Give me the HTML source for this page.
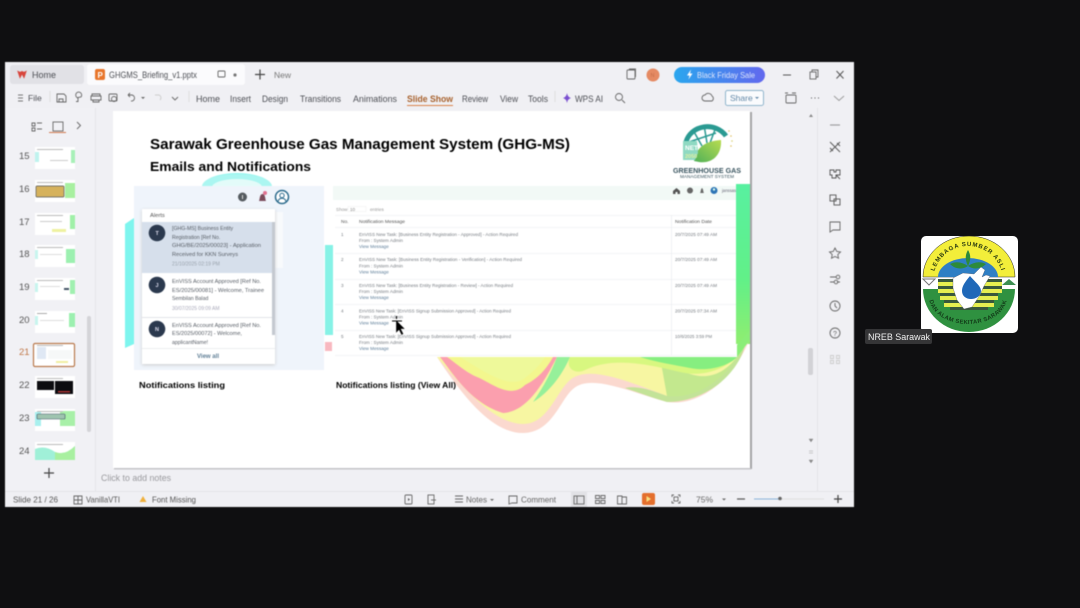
<!DOCTYPE html>
<html lang="en"><head><meta charset="utf-8"><title>GHGMS Briefing</title>
<style>
html,body{margin:0;padding:0;width:1080px;height:608px;overflow:hidden;background:#0f0f11}
svg{display:block;position:absolute;left:0;top:0}
text{font-family:"Liberation Sans",sans-serif}
.soft{filter:blur(.45px)}
.ui{font-size:9px;fill:#4d4f55}
.s{font-size:5.2px;fill:#5a6068}
.t{font-size:4.6px;fill:#777c82}
.l{font-size:4.6px;fill:#5f7f9a}
.ic{fill:none;stroke:#666;stroke-width:.9}
.ht{font-weight:bold;fill:#000}
</style></head><body>
<svg width="1080" height="608" viewBox="0 0 1080 608" xmlns="http://www.w3.org/2000/svg">
<defs>
<linearGradient id="pill" x1="0" x2="1"><stop offset="0" stop-color="#2aa6ee"/><stop offset="1" stop-color="#6268ee"/></linearGradient>
<linearGradient id="gr" x1="0" y1="0" x2="0" y2="1"><stop offset="0" stop-color="#58f0a0"/><stop offset=".6" stop-color="#62f088"/><stop offset="1" stop-color="#90ee70"/></linearGradient>
<linearGradient id="leaf" x1="0" y1="1" x2="1" y2="0"><stop offset="0" stop-color="#4fb058"/><stop offset="1" stop-color="#b8dc50"/></linearGradient>
<path id="arcTop" d="M933 281 A35 35 0 0 1 1003 281"/>
<path id="arcBot" d="M929 297 A39 27 0 0 0 1007 297"/>
</defs>
<rect width="1080" height="608" fill="#0f0f11"/>
<g class="soft">
<!-- window -->
<rect x="5" y="62" width="849" height="445" fill="#f0f0f4"/>
<rect x="10" y="65" width="74" height="19" rx="3" fill="#e1e1e6"/>
<rect x="87" y="64" width="158" height="21" rx="3" fill="#fbfbfd"/>
<path d="M18 71.5l2 6 2-4 2 4 2-6-2 1-2-1-2 1z" fill="#d8453c" stroke="#d8453c" stroke-width="1"/>
<text x="32" y="78" class="ui">Home</text>
<rect x="95" y="69" width="10" height="11" rx="2" fill="#e8762c"/>
<text x="97.5" y="78" style="font-size:8px;font-weight:bold;fill:#fff">P</text>
<text x="109" y="78" class="ui" textLength="88" lengthAdjust="spacingAndGlyphs">GHGMS_Briefing_v1.pptx</text>
<rect x="218" y="71" width="7" height="6" rx="1" class="ic" stroke="#888"/>
<circle cx="235" cy="75" r="1.6" fill="#777"/>
<path d="M260 69.5v10M255 74.5h10" stroke="#444" stroke-width="1.2"/>
<text x="274" y="78" style="font-size:8.5px;fill:#777">New</text>
<rect x="627" y="70" width="8" height="9" rx="1" class="ic"/><path d="M629 69h6.500v8" class="ic" stroke-width=".7"/>
<circle cx="653" cy="75" r="6.500" fill="#e58a63"/><text x="650.500" y="77" style="font-size:5.500px;fill:#c76f4a">N</text>
<rect x="674" y="67" width="91" height="16" rx="8" fill="url(#pill)"/>
<path d="M691 69.500l-4 6h2.500l-1 4 4-6h-2.500z" fill="#fff"/>
<text x="697" y="78" style="font-size:8.500px;fill:#dfe6fb" textLength="58" lengthAdjust="spacingAndGlyphs">Black Friday Sale</text>
<path d="M783 75h8" stroke="#555"/>
<rect x="810" y="72" width="6" height="7" class="ic"/><path d="M812 72v-2h6v7h-2" class="ic"/>
<path d="M836.500 71l7 7.500M843.500 71l-7 7.500" stroke="#555"/>
<!-- ribbon -->
<path d="M18 95h5M18 98h5M18 101h5" stroke="#777"/>
<text x="28" y="101" class="ui" style="font-size:8.500px">File</text>
<path d="M50 91v11" stroke="#ddd"/>
<path d="M57 94h7l2 2v6h-9zM59 102v-3h4v3" class="ic"/>
<path d="M78 98a3 3 0 1 1 3 -1l-3 .5v4h-2" class="ic"/>
<path d="M92 96v-2h8v2M91 96h10v4h-10zM93 100h6v2h-6z" class="ic"/>
<rect x="109" y="94" width="8" height="7" rx="1" class="ic"/><circle cx="114" cy="99" r="2.500" class="ic"/>
<path d="M128 95h4a3 3 0 0 1 -1 6M128 95l2-2M128 95l2 2" class="ic"/><path d="M141 97l2 2 2-2" fill="#666"/>
<path d="M155 95h4a3 3 0 0 1 1 5" class="ic" style="stroke:#ccc"/>
<path d="M172 97l3 3 3-3" class="ic"/>
<path d="M189 91v11" stroke="#ddd"/>
<text x="196" y="102" class="ui" textLength="24" lengthAdjust="spacingAndGlyphs">Home</text>
<text x="230" y="102" class="ui" textLength="21" lengthAdjust="spacingAndGlyphs">Insert</text>
<text x="262" y="102" class="ui" textLength="26" lengthAdjust="spacingAndGlyphs">Design</text>
<text x="300" y="102" class="ui" textLength="41" lengthAdjust="spacingAndGlyphs">Transitions</text>
<text x="353" y="102" class="ui" textLength="44" lengthAdjust="spacingAndGlyphs">Animations</text>
<text x="407" y="102" style="font-size:9px;font-weight:bold;fill:#a8622e" textLength="46" lengthAdjust="spacingAndGlyphs">Slide Show</text>
<text x="462" y="102" class="ui" textLength="26" lengthAdjust="spacingAndGlyphs">Review</text>
<text x="500" y="102" class="ui" textLength="18" lengthAdjust="spacingAndGlyphs">View</text>
<text x="528" y="102" class="ui" textLength="20" lengthAdjust="spacingAndGlyphs">Tools</text>
<text x="575" y="102" class="ui" textLength="28" lengthAdjust="spacingAndGlyphs">WPS AI</text>
<rect x="407" y="105" width="46" height="1" fill="#d9824a"/>
<path d="M567 93q.6 4 4 5q-3.400 1-4 5q-.6-4-4-5q3.400-1 4-5z" fill="#7a4fd0"/>
<path d="M555 91v11" stroke="#ddd"/>
<circle cx="619" cy="97" r="3.500" class="ic"/><path d="M622 100l3 3" class="ic"/>
<path d="M705 101a3 3 0 0 1 0-6a4 4 0 0 1 7 1a3 3 0 0 1 0 5z" class="ic"/>
<rect x="725.500" y="90.500" width="38" height="15" rx="2" fill="#fafbfd" stroke="#8fb4cc"/>
<text x="730" y="101" style="font-size:8.500px;fill:#6288a8">Share</text><path d="M755 97l2 2 2-2" fill="#6288a8"/>
<rect x="786" y="95" width="10" height="8" rx="1" class="ic"/><path d="M785 93h3M792 93h4" class="ic"/>
<path d="M811 98h1M814.500 98h1M818 98h1" stroke="#555"/>
<path d="M834 96l5 4.500 5-4.500" class="ic" style="stroke:#999"/>
<!-- left thumb pane -->
<rect x="5" y="108" width="90" height="383" fill="#f1f1f5"/>
<path d="M95.500 108v383" stroke="#e6e6ea"/>
<path d="M32 123h3v3h-3zM32 128h3v3h-3zM37 123h5M37 129h5" class="ic" stroke-width=".8"/>
<rect x="53" y="122" width="10" height="9" class="ic"/><rect x="49" y="132" width="17" height="1" fill="#d27b50"/>
<path d="M77 122l3.500 3.500-3.500 3.500" class="ic"/>
<text x="19" y="159" style="font-size:9.500px;fill:#555">15</text>
<text x="19" y="192" style="font-size:9.500px;fill:#555">16</text>
<text x="19" y="225" style="font-size:9.500px;fill:#555">17</text>
<text x="19" y="257" style="font-size:9.500px;fill:#555">18</text>
<text x="19" y="290" style="font-size:9.500px;fill:#555">19</text>
<text x="19" y="323" style="font-size:9.500px;fill:#555">20</text>
<text x="19" y="355" style="font-size:9.500px;fill:#c07748">21</text>
<text x="19" y="388" style="font-size:9.500px;fill:#555">22</text>
<text x="19" y="421" style="font-size:9.500px;fill:#555">23</text>
<text x="19" y="454" style="font-size:9.500px;fill:#555">24</text>
<!-- thumbs -->
<g>
<rect x="35" y="147" width="40" height="22" fill="#fff"/><rect x="35" y="152" width="4" height="10" fill="#bff3ee"/><rect x="71" y="150" width="4" height="13" fill="#a8f0b8"/><rect x="37" y="149" width="26" height="1" fill="#bbb"/><rect x="50" y="160" width="18" height="1" fill="#ccc"/>
<rect x="35" y="180" width="40" height="22" fill="#fff"/><rect x="36" y="186" width="28" height="11" rx="1" fill="#d6b25c" stroke="#555" stroke-width=".7"/><rect x="65" y="183" width="10" height="15" fill="#a8f0a0"/><rect x="37" y="182" width="26" height="1" fill="#bbb"/>
<rect x="35" y="213" width="40" height="22" fill="#fff"/><rect x="70" y="215" width="5" height="14" fill="#a0f0a8"/><rect x="52" y="229" width="14" height="3" fill="#eef2a0"/><rect x="37" y="215" width="26" height="1" fill="#bbb"/><rect x="40" y="221" width="22" height="1" fill="#ccc"/>
<rect x="35" y="245" width="40" height="22" fill="#fff"/><rect x="66" y="249" width="9" height="14" fill="#9cf0b0"/><rect x="35" y="250" width="3" height="9" fill="#c8f5ee"/><rect x="37" y="247" width="26" height="1" fill="#bbb"/><rect x="40" y="254" width="22" height="1" fill="#ddd"/>
<rect x="35" y="278" width="40" height="22" fill="#fff"/><rect x="70" y="280" width="5" height="14" fill="#a0f0b0"/><rect x="35" y="283" width="3" height="9" fill="#c8f5ee"/><rect x="37" y="280" width="26" height="1" fill="#bbb"/><rect x="64" y="288" width="5" height="2" fill="#456"/><rect x="40" y="286" width="20" height="1" fill="#ddd"/>
<rect x="35" y="311" width="40" height="22" fill="#fff"/><rect x="69" y="313" width="6" height="14" fill="#9cf0b0"/><rect x="35" y="316" width="3" height="9" fill="#c8f5ee"/><rect x="37" y="313" width="10" height="1" fill="#aaa"/><rect x="40" y="320" width="24" height="1" fill="#ddd"/>
<rect x="33.500" y="343.500" width="41" height="23" rx="1.500" fill="#fff" stroke="#b9794d" stroke-width="1.200"/><rect x="37" y="347" width="9" height="12" fill="#dfe8f4"/><rect x="48" y="350" width="24" height="9" fill="#f6f8f8"/><rect x="37" y="345" width="26" height="1" fill="#bbb"/><rect x="56" y="361" width="12" height="2" fill="#f0eea0"/>
<rect x="35" y="376" width="40" height="22" fill="#fff"/><rect x="37" y="381" width="17" height="9" fill="#0c0c10"/><rect x="55" y="381" width="18" height="13" fill="#0c0c10"/><rect x="37" y="378" width="26" height="1" fill="#bbb"/><rect x="58" y="391" width="12" height="1.500" fill="#a33"/>
<rect x="35" y="409" width="40" height="22" fill="#fff"/><rect x="35" y="412" width="6" height="14" fill="#a8f0ee"/><rect x="60" y="411" width="15" height="15" fill="#a8f0a8"/><rect x="37" y="414" width="28" height="5" rx="1" fill="#9fc4b0" stroke="#456" stroke-width=".6"/><rect x="37" y="411" width="26" height="1" fill="#bbb"/>
<rect x="35" y="442" width="40" height="18" fill="#fff"/><path d="M35 449q10-4 20 3q10 4 20-6v14h-40z" fill="#a0f0d8"/><path d="M55 452q10 4 20-6v14h-20z" fill="#a8f0a0"/><rect x="37" y="444" width="26" height="1" fill="#bbb"/>
</g>
<rect x="87" y="316" width="4" height="116" rx="2" fill="#d4d4d8"/>
<path d="M49 468v10M44 473h10" stroke="#444" stroke-width="1.200"/>
<!-- right pane -->
<path d="M817.500 108v383" stroke="#e4e4e8"/>
<path d="M811 114l-2 3h4z" fill="#888"/>
<rect x="808" y="348" width="5" height="27" rx="2" fill="#d2d2d6"/>
<path d="M809 439h4l-2 3zM809 451h4M809 453h4M809 460h4l-2 3z" fill="#888" stroke="#888" stroke-width=".4"/>
<path d="M830 125h10" stroke="#999" stroke-width="1.100"/>
<path d="M830 142l10 10M840 142l-10 10M830 148l3 3M837 143l3 3" class="ic" style="stroke:#555"/>
<path d="M830 170h4v2h2v-2h4v5h-4v3h-4v-3h-2z" class="ic" style="stroke:#555"/><path d="M836 175l4 4" class="ic" style="stroke:#555"/>
<rect x="830" y="195" width="6" height="6" class="ic" style="stroke:#555"/><rect x="834" y="199" width="6" height="6" class="ic" style="stroke:#555"/>
<path d="M830 222h10v8h-7l-3 2z" class="ic"/>
<path d="M835 248l1.800 3.500 3.700.5-2.700 2.500.7 3.700-3.500-1.700-3.500 1.700.7-3.700-2.700-2.500 3.700-.5z" class="ic"/>
<path d="M830 277h6M830 282h4M837 282h3" class="ic"/><circle cx="838" cy="277" r="1.800" class="ic"/><circle cx="836" cy="282" r="1.800" class="ic"/>
<circle cx="835" cy="306" r="5" class="ic"/><path d="M835 303v3l2 2" class="ic"/>
<circle cx="835" cy="333" r="5" class="ic"/><text x="833" y="336" style="font-size:7px;fill:#666">?</text>
<path d="M830.500 355.500h3v3h-3zM836.500 355.500h3v3h-3zM830.500 360.500h3v3h-3zM836.500 360.500h3v3h-3z" class="ic" style="stroke:#ccc"/>
<!-- slide -->
<rect x="750" y="112" width="2" height="357" fill="#a4a4a6"/>
<rect x="114" y="468" width="637" height="1.500" fill="#c4c4c8"/>
<rect x="113" y="111" width="637" height="357" fill="#fff"/>
<!-- art -->
<path d="M202 187a35 14 0 0 1 70 0z" fill="#8ff5ee"/><path d="M212 187a25 8 0 0 1 50 0z" fill="#fff"/>
<path d="M125 224l9-6v126l-9 4z" fill="#7ef5ee"/>
<path d="M325 245h8v90h-8z" fill="#86f2e6"/><path d="M325 342h7v9h-7z" fill="#f8b8c0"/>
<rect x="736" y="184" width="14" height="160" fill="url(#gr)"/>
<path d="M437 357C460 392 490 433 523 433C552 433 560 400 573 389C590 374 625 390 667 402C700 407 735 378 750 338V340L737 357z" fill="#fbd9cf"/>
<path d="M437 357C465 390 495 424 523 424C548 424 556 392 570 380C588 365 625 380 667 396C700 400 730 375 745 345L737 357z" fill="#f7f6a2"/>
<path d="M660 357C690 380 715 385 737 357L745 345C738 375 705 402 667 402C650 397 640 393 625 388C640 385 655 392 667 396z" fill="#b5e58a" opacity=".8"/>
<path d="M445 357C480 380 510 400 530 392C545 385 550 370 556 357z" fill="#f3f78e"/>
<path d="M440 357C452 372 470 403 503 413C528 412 545 380 557 357H553C545 372 535 380 525 385C510 400 490 382 477 377C465 372 452 360 447 357z" fill="#fb9fae"/>
<path d="M460 357C485 372 510 390 525 378C535 370 540 365 545 357z" fill="#eef99a"/>
<path d="M557 357H570C560 380 545 395 533 402C545 385 552 370 557 357z" fill="#96f09a"/>
<path d="M570 357H737C725 368 705 378 680 372C640 362 610 358 585 370C575 375 565 368 570 357z" fill="#d8f780"/>
<path d="M640 357H737C730 365 710 372 690 368C675 365 655 362 640 357z" fill="#86ee80"/>
<path d="M737 357L750 340V330L737 345z" fill="#8aee78"/>
<!-- title -->
<text x="150" y="149" class="ht" style="font-size:14.500px" textLength="420" lengthAdjust="spacingAndGlyphs">Sarawak Greenhouse Gas Management System (GHG-MS)</text>
<text x="150" y="171" class="ht" style="font-size:12.500px" textLength="161" lengthAdjust="spacingAndGlyphs">Emails and Notifications</text>
<!-- GHG logo -->
<path d="M686 142a22 20 0 0 1 40 -6" fill="none" stroke="#2a9a92" stroke-width="5"/>
<path d="M693 130l9 16M704 125l3 18M716 127l-6 16M686 143l30-10" fill="none" stroke="#2a9a92" stroke-width="1.500"/>
<path d="M694 161c2-14 12-20 27-21c1 14-8 24-22 22z" fill="url(#leaf)"/>
<path d="M683 141h14l1 12-3 7h-12z" fill="#8fd9c2"/>
<text x="685" y="150" style="font-size:6.500px;font-weight:bold;fill:#fff">NET</text>
<text x="685" y="158" style="font-size:5.500px;font-weight:bold;fill:#e0f0a0">2050</text>
<circle cx="729" cy="131" r=".8" fill="#e0c060"/><circle cx="731" cy="136" r=".8" fill="#e0c060"/><circle cx="732" cy="141" r=".8" fill="#d8d070"/><circle cx="731" cy="146" r=".8" fill="#e0c060"/>
<text x="673" y="173" style="font-size:7.500px;font-weight:bold;fill:#3a5560" textLength="68" lengthAdjust="spacingAndGlyphs">GREENHOUSE GAS</text>
<text x="680" y="178" style="font-size:4.500px;fill:#3a5560" textLength="54" lengthAdjust="spacingAndGlyphs">MANAGEMENT SYSTEM</text>
<!-- left mock -->
<rect x="134" y="186" width="190" height="184" fill="#eff4fb"/>
<path d="M202 186a35 12 0 0 1 70 0z" fill="#c8f8f4" opacity=".5"/>
<circle cx="242.500" cy="197" r="4.500" fill="#555b60"/><rect x="242" y="195" width="1" height="4" fill="#ddd"/>
<path d="M259 201c1-2 .5-7 3.500-7s2.500 5 3.500 7z" fill="#7a4a5a"/><circle cx="265" cy="193" r="2" fill="#e07090"/>
<circle cx="282" cy="197" r="6.500" fill="#fff" stroke="#2b6a8c" stroke-width="1.500"/><circle cx="282" cy="195.500" r="2.200" fill="none" stroke="#2b6a8c"/><path d="M278 202c0-5 8-5 8 0" fill="none" stroke="#2b6a8c"/>
<rect x="275" y="212" width="8" height="56" fill="#f8fafc"/>
<rect x="142" y="209" width="133" height="155" fill="#fff" style="filter:drop-shadow(0 1px 1.500px #ccc)"/>
<text x="150" y="217" style="font-size:5.800px;fill:#555">Alerts</text>
<rect x="142" y="222" width="130" height="51" fill="#d6dfeb"/>
<rect x="272" y="222" width="3" height="113" fill="#c4c9d0"/>
<circle cx="157" cy="233" r="8.300" fill="#2b394e"/><text x="155.500" y="235" style="font-size:5.500px;font-weight:bold;fill:#dde">T</text>
<text x="172" y="230" class="s">[GHG-MS] Business Entity</text>
<text x="172" y="239" class="s">Registration [Ref No.</text>
<text x="172" y="247" class="s" textLength="89" lengthAdjust="spacingAndGlyphs">GHG/BE/2025/00023] - Application</text>
<text x="172" y="256" class="s" textLength="66" lengthAdjust="spacingAndGlyphs">Received for KKN Surveys</text>
<text x="172" y="265.500" style="font-size:5px;fill:#9aa3ad">21/10/2025 02:19 PM</text>
<circle cx="157" cy="285" r="8.300" fill="#2b394e"/><text x="155.500" y="287" style="font-size:5.500px;font-weight:bold;fill:#dde">J</text>
<text x="172" y="283" class="s" textLength="89" lengthAdjust="spacingAndGlyphs">EnVISS Account Approved [Ref No.</text>
<text x="172" y="292" class="s" textLength="92" lengthAdjust="spacingAndGlyphs">ES/2025/00081] - Welcome, Trainee</text>
<text x="172" y="300" class="s">Sembilan Balad</text>
<text x="172" y="310" style="font-size:5px;fill:#aab">30/07/2025 09:09 AM</text>
<path d="M142 317.500h130" stroke="#e2e4e8"/>
<circle cx="157" cy="329" r="8.300" fill="#2b394e"/><text x="155" y="331" style="font-size:5.500px;font-weight:bold;fill:#dde">N</text>
<text x="172" y="327" class="s" textLength="89" lengthAdjust="spacingAndGlyphs">EnVISS Account Approved [Ref No.</text>
<text x="172" y="335" class="s" textLength="70" lengthAdjust="spacingAndGlyphs">ES/2025/00072] - Welcome,</text>
<text x="172" y="344" class="s">applicantName!</text>
<rect x="142" y="348" width="133" height="16" fill="#fff"/>
<path d="M142 348.500h133" stroke="#eceef0"/>
<text x="197" y="358" style="font-size:6.200px;font-weight:bold;fill:#607f96" textLength="22" lengthAdjust="spacingAndGlyphs">View all</text>
<text x="139" y="388" class="ht" style="font-size:8.500px" textLength="86" lengthAdjust="spacingAndGlyphs">Notifications listing</text>
<!-- right mock -->
<rect x="333" y="186" width="403" height="171" fill="#fff"/>
<rect x="333" y="186" width="403" height="14" fill="#f2f9f6"/>
<path d="M673 191l3.500-3 3.500 3v3h-2.500v-2h-2v2h-2.500z" fill="#555"/>
<circle cx="690" cy="190.500" r="3" fill="#666"/>
<path d="M700 193c1-1 .5-4 2-5c1.500 1 1 4 2 5z" fill="#666"/>
<circle cx="714" cy="190.500" r="3.500" fill="#2e75b6"/><circle cx="714" cy="189.500" r="1.200" fill="#dfe"/>
<text x="722" y="192" style="font-size:4.500px;fill:#667" textLength="14" lengthAdjust="spacingAndGlyphs">janssas</text>
<text x="336" y="211" class="t" style="fill:#999">Show</text>
<rect x="348" y="206.500" width="18" height="5" fill="#fff" stroke="#eee" stroke-width=".5"/><text x="350" y="211" class="t" style="fill:#888">10</text>
<text x="370" y="211" class="t" style="fill:#999">entries</text>
<path d="M335 215.500h401M335 227.500h401M335 253.500h401M335 279.500h401M335 304.500h401M335 330.500h401M335 355.500h401" stroke="#f0f1f3" stroke-width=".7"/>
<path d="M671.500 215v140" stroke="#eaecef" stroke-width=".7"/>
<text x="341" y="223" style="font-size:4.800px;fill:#555">No.</text>
<text x="359" y="223" style="font-size:4.800px;fill:#555" textLength="46" lengthAdjust="spacingAndGlyphs">Notification Message</text>
<text x="675" y="223" style="font-size:4.800px;fill:#555" textLength="37" lengthAdjust="spacingAndGlyphs">Notification Date</text>
<text x="341" y="236" class="t">1</text><text x="359" y="236" class="t" textLength="159" lengthAdjust="spacingAndGlyphs">EnVISS New Task: [Business Entity Registration - Approved] - Action Required</text><text x="359" y="242" class="t">From : System Admin</text><text x="359" y="248" class="l">View Message</text><text x="675" y="236" class="t" textLength="42" lengthAdjust="spacingAndGlyphs">20/7/2025 07:49 AM</text>
<text x="341" y="261" class="t">2</text><text x="359" y="261" class="t" textLength="163" lengthAdjust="spacingAndGlyphs">EnVISS New Task: [Business Entity Registration - Verification] - Action Required</text><text x="359" y="267.500" class="t">From : System Admin</text><text x="359" y="273.500" class="l">View Message</text><text x="675" y="261" class="t" textLength="42" lengthAdjust="spacingAndGlyphs">20/7/2025 07:49 AM</text>
<text x="341" y="287" class="t">3</text><text x="359" y="287" class="t" textLength="154" lengthAdjust="spacingAndGlyphs">EnVISS New Task: [Business Entity Registration - Review] - Action Required</text><text x="359" y="293" class="t">From : System Admin</text><text x="359" y="299" class="l">View Message</text><text x="675" y="287" class="t" textLength="42" lengthAdjust="spacingAndGlyphs">20/7/2025 07:49 AM</text>
<text x="341" y="312.500" class="t">4</text><text x="359" y="312.500" class="t" textLength="152" lengthAdjust="spacingAndGlyphs">EnVISS New Task: [EnVISS Signup Submission Approved] - Action Required</text><text x="359" y="318.500" class="t">From : System Admin</text><text x="359" y="324.500" class="l">View Message</text><text x="675" y="312.500" class="t" textLength="42" lengthAdjust="spacingAndGlyphs">20/7/2025 07:34 AM</text>
<text x="341" y="338" class="t">5</text><text x="359" y="338" class="t" textLength="152" lengthAdjust="spacingAndGlyphs">EnVISS New Task: [EnVISS Signup Submission Approved] - Action Required</text><text x="359" y="344" class="t">From : System Admin</text><text x="359" y="350" class="l">View Message</text><text x="675" y="338" class="t" textLength="37" lengthAdjust="spacingAndGlyphs">10/6/2025 3:59 PM</text>
<text x="336" y="388" class="ht" style="font-size:8.500px" textLength="120" lengthAdjust="spacingAndGlyphs">Notifications listing (View All)</text>
<!-- notes -->
<text x="101" y="481" style="font-size:9px;fill:#9a9a9e" textLength="70" lengthAdjust="spacingAndGlyphs">Click to add notes</text>
<!-- status bar -->
<path d="M5 491.500h849" stroke="#e4e4e8"/>
<text x="13" y="502.500" style="font-size:8.500px;fill:#555" textLength="45" lengthAdjust="spacingAndGlyphs">Slide 21 / 26</text>
<path d="M74 496h8v8h-8zM74 500h8M78 496v8" class="ic" stroke-width=".8"/>
<text x="86" y="502.500" style="font-size:8.500px;fill:#555" textLength="34" lengthAdjust="spacingAndGlyphs">VanillaVTI</text>
<path d="M143 496l3.500 6h-7z" fill="#efb03c"/>
<text x="152" y="502.500" style="font-size:8.500px;fill:#555" textLength="44" lengthAdjust="spacingAndGlyphs">Font Missing</text>
<rect x="405" y="495" width="7" height="9" rx="1" class="ic"/><path d="M408 498l2 1.500-2 1.500z" fill="#555"/>
<rect x="428" y="495" width="6" height="9" class="ic"/><path d="M431 500h5" class="ic"/>
<path d="M455 496h8M455 499h8M455 502h8" class="ic" stroke-width=".8"/>
<text x="466" y="502.500" style="font-size:8.500px;fill:#666" textLength="21" lengthAdjust="spacingAndGlyphs">Notes</text><path d="M490 499l2 2 2-2" fill="#666"/>
<path d="M509 496h8v7h-5l-3 1z" class="ic"/>
<text x="521" y="502.500" style="font-size:8.500px;fill:#666" textLength="35" lengthAdjust="spacingAndGlyphs">Comment</text>
<rect x="571" y="492" width="16" height="15" fill="#e2e2e6"/>
<rect x="574" y="496" width="10" height="8" class="ic"/><path d="M577 496v8" class="ic"/>
<path d="M595.500 495.500h4v3h-4zM601 495.500h4v3h-4zM595.500 500.500h4v3h-4zM601 500.500h4v3h-4z" class="ic"/>
<path d="M617.500 496h4.500v8h-4.500zM622 497h4.500v7h-4.500z" class="ic"/>
<rect x="642" y="493" width="13" height="12" rx="2" fill="#e46f2d"/><path d="M646.500 496l4.500 3-4.500 3z" fill="#f8e080"/>
<path d="M672 497v-2h2M678 495h2v2M680 501v2h-2M674 503h-2v-2" class="ic"/><rect x="674" y="497" width="4" height="4" class="ic"/>
<text x="696" y="502.500" style="font-size:8.500px;fill:#666">75%</text><path d="M722 498.500l2 2 2-2" fill="#666"/>
<path d="M737 499h8" stroke="#555" stroke-width="1.200"/>
<path d="M754 499h25" stroke="#8ab4d8"/><path d="M779 499h45" stroke="#ddd"/><circle cx="780" cy="498.500" r="1.800" fill="#666"/>
<path d="M834 499h8M838 495v8" stroke="#444" stroke-width="1.200"/>
<!-- cursor -->
<path d="M396 320l0 13 3-3 2.500 5 2-1-2.500-5h4z" fill="#000" stroke="#fff" stroke-width=".3"/>
<path d="M392 321h10M396.500 316v3" stroke="#000" stroke-width="1"/>
</g>
<!-- right participant tile -->
<g style="filter:blur(.35px)">
<rect x="921" y="236" width="97" height="97" rx="5" fill="#fff"/>
<path d="M923 277A46 41 0 0 1 1015 277z" fill="#f3ee3a" stroke="#222" stroke-width=".5"/>
<path d="M938 277A30 19 0 0 1 998 277z" fill="#2f7fc4"/>
<text style="font-size:6px;font-weight:bold;fill:#2a3a10;letter-spacing:.9px" text-anchor="middle"><textPath href="#arcTop" startOffset="50%">LEMBAGA SUMBER ASLI</textPath></text>
<path d="M968 250c-3 5-3 10 0 16c3-6 3-11 0-16zM968 266c-6-4-12-5-18-2c5 5 12 6 18 2zM968 266c6-4 12-5 18-2c-5 5-12 6-18 2z" fill="#2d8a3a"/>
<path d="M923 289H1015A46 43 0 0 1 923 289z" fill="#2f9140"/>
<path d="M923 279l6 6 6-6z" fill="none" stroke="#777"/>
<path d="M1002 285l7-6 7 6z" fill="#3d8f52"/>
<path d="M938 279h64v3h-64zM938 286h64v3h-64zM940 293h58v3h-58zM944 300h50v3h-50zM950 307h38v3h-38z" fill="#39583c"/>
<path d="M938 282h64v4h-64zM938 289h64v4h-64zM940 296h58v4h-58zM944 303h50v4h-50z" fill="#e6ee50"/>
<text style="font-size:5.800px;font-weight:bold;fill:#123a18;letter-spacing:.35px" text-anchor="middle"><textPath href="#arcBot" startOffset="50%">DAN ALAM SEKITAR SARAWAK</textPath></text>
<path d="M953 278l10-5 11 1 7-7 4 3-3 7 4-2 4 1-6 10-4 9-8 12-8 2-7-9-4-12z" fill="#fff" stroke="#445" stroke-width=".3"/>
<path d="M970 276c-5 6-8 10-8 15c0 5 4 8 9 8c5 0 10-3 10-8c0-5-6-9-11-15z" fill="#1f68b8"/>
</g>
<rect x="865" y="329" width="67" height="15" rx="2" fill="#353537"/>
<text x="868" y="340" style="font-size:9.500px;fill:#f0f0f0" textLength="62" lengthAdjust="spacingAndGlyphs">NREB Sarawak</text>
</svg>
</body></html>
